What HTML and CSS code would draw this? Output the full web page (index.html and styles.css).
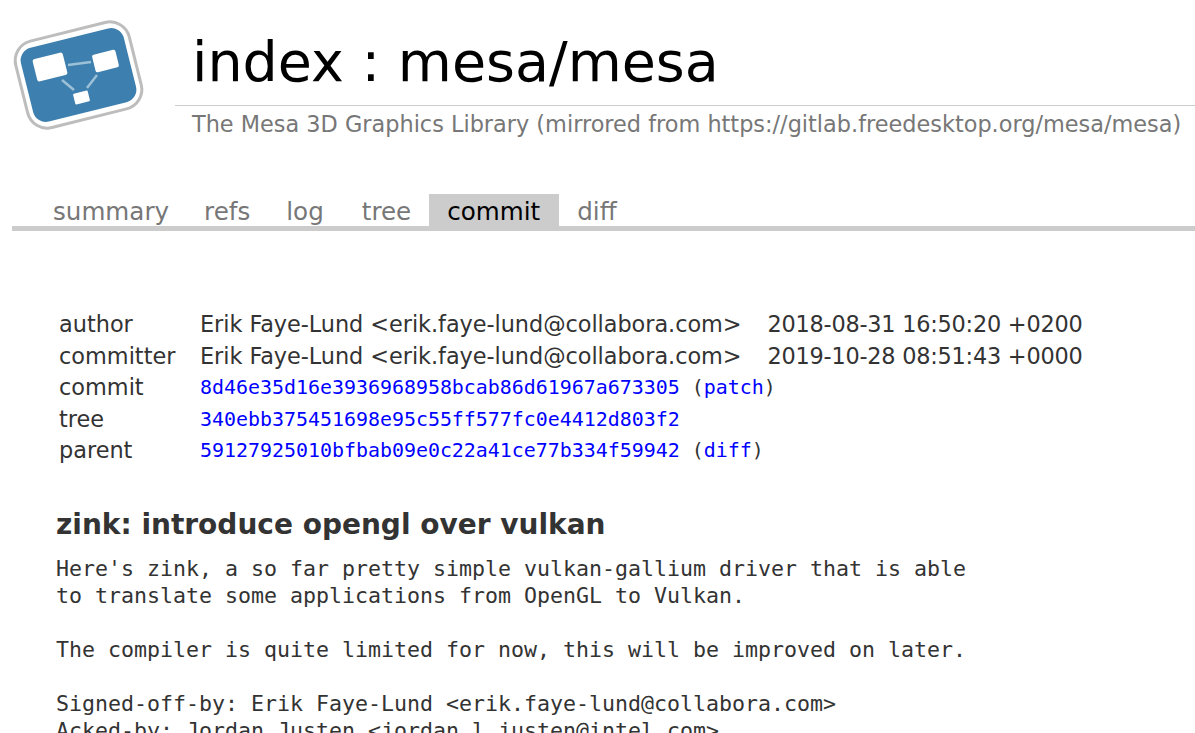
FILE: index.html
```html
<!DOCTYPE html>
<html lang="en">
<head>
<meta charset="utf-8">
<title>mesa/mesa</title>
<link rel="stylesheet" href="styles.css">
</head>
<body>
<div class="page">
<header class="header">
  <div class="logo-cell">
    <svg class="logo" width="175" height="152" viewBox="0 0 175 152">
      <rect x="20" y="30.5" width="117" height="89" rx="20" transform="rotate(-14 78.5 75)" fill="#fff" stroke="#bdbdbd" stroke-width="3"/>
      <rect x="25.5" y="37" width="106" height="76" rx="13" transform="rotate(-14 78.5 75)" fill="#3d7fae"/>
      <path d="M68 65 L91 62 M62 80 L74 90 M97 75 L87 88" stroke="#9cc0d6" stroke-width="2.5" fill="none"/>
      <rect x="34.5" y="55.5" width="31" height="23" rx="2.5" transform="rotate(-14 50 67)" fill="#fff"/>
      <rect x="93.5" y="52" width="24" height="18" rx="2" transform="rotate(-14 105.5 61)" fill="#fff"/>
      <rect x="74" y="92" width="15" height="11" rx="1" transform="rotate(-14 81.5 97.5)" fill="#fff"/>
    </svg>
  </div>
  <div class="title-cell">
    <div class="title">index : mesa/mesa</div>
    <div class="sub">The Mesa 3D Graphics Library (mirrored from https://gitlab.freedesktop.org/mesa/mesa)</div>
  </div>
</header>
<nav class="tabs">
  <a class="tab tab-summary">summary</a><a class="tab">refs</a><a class="tab tab-log">log</a><a class="tab">tree</a><a class="tab active">commit</a><a class="tab">diff</a>
</nav>
<main class="content">
  <div class="info">
    <div class="k">author</div><div class="v"><span class="who">Erik Faye-Lund &lt;erik.faye-lund@collabora.com&gt;</span><span class="date">2018-08-31 16:50:20 +0200</span></div>
    <div class="k">committer</div><div class="v"><span class="who">Erik Faye-Lund &lt;erik.faye-lund@collabora.com&gt;</span><span class="date">2019-10-28 08:51:43 +0000</span></div>
    <div class="k">commit</div><div class="v mono"><a>8d46e35d16e3936968958bcab86d61967a673305</a> (<a>patch</a>)</div>
    <div class="k">tree</div><div class="v mono"><a>340ebb375451698e95c55ff577fc0e4412d803f2</a></div>
    <div class="k">parent</div><div class="v mono"><a>59127925010bfbab09e0c22a41ce77b334f59942</a> (<a>diff</a>)</div>
  </div>
  <h2 class="subject">zink: introduce opengl over vulkan</h2>
  <pre class="msg">Here's zink, a so far pretty simple vulkan-gallium driver that is able
to translate some applications from OpenGL to Vulkan.

The compiler is quite limited for now, this will be improved on later.

Signed-off-by: Erik Faye-Lund &lt;erik.faye-lund@collabora.com&gt;
Acked-by: Jordan Justen &lt;jordan.l.justen@intel.com&gt;</pre>
</main>
</div>
</body>
</html>
```
FILE: styles.css
```css
html, body { margin: 0; padding: 0; height: 733px; overflow: hidden; background: #fff; }
body { font-family: "DejaVu Sans", sans-serif; color: #333; }
.page { padding: 0 0 0 12px; }
.header { display: flex; height: 152px; margin-left: -12px; }
.logo-cell { width: 175px; flex: none; }
.logo { display: block; }
.title-cell { flex: 1; }
.title { font-size: 55.5px; line-height: 62px; color: #000; padding: 31px 0 0 17px; height: 74px; border-bottom: 1px solid #ccc; }
.sub { font-size: 22.4px; line-height: 26px; color: #777; padding: 5px 0 0 17px; white-space: nowrap; }
.tabs { display: flex; margin-top: 42px; padding-left: 23px; border-bottom: 5px solid #ccc; height: 32px; }
.tab { font-size: 24.6px; line-height: 35px; color: #777; padding: 0 18px; }
.tab-summary { padding-right: 17px; }
.tab-log { padding-right: 20px; }
.active { background: #ccc; color: #000; padding-right: 19px; }
.content { padding: 78px 0 0 44px; }
.info { display: grid; grid-template-columns: 141px 1fr; font-size: 22.4px; line-height: 31.5px; margin-left: 3px; }
.v { white-space: nowrap; }
.who { margin-right: 26px; letter-spacing: -0.05px; }
.date { letter-spacing: -0.23px; }
.mono { font-family: "DejaVu Sans Mono", monospace; font-size: 19.93px; }
.mono a { color: #00f; }
.subject { font-size: 28px; line-height: 32px; margin: 42px 0 0; }
.msg { font-family: "DejaVu Sans Mono", monospace; font-size: 21.6px; line-height: 27px; margin: 14px 0 0; }
```
